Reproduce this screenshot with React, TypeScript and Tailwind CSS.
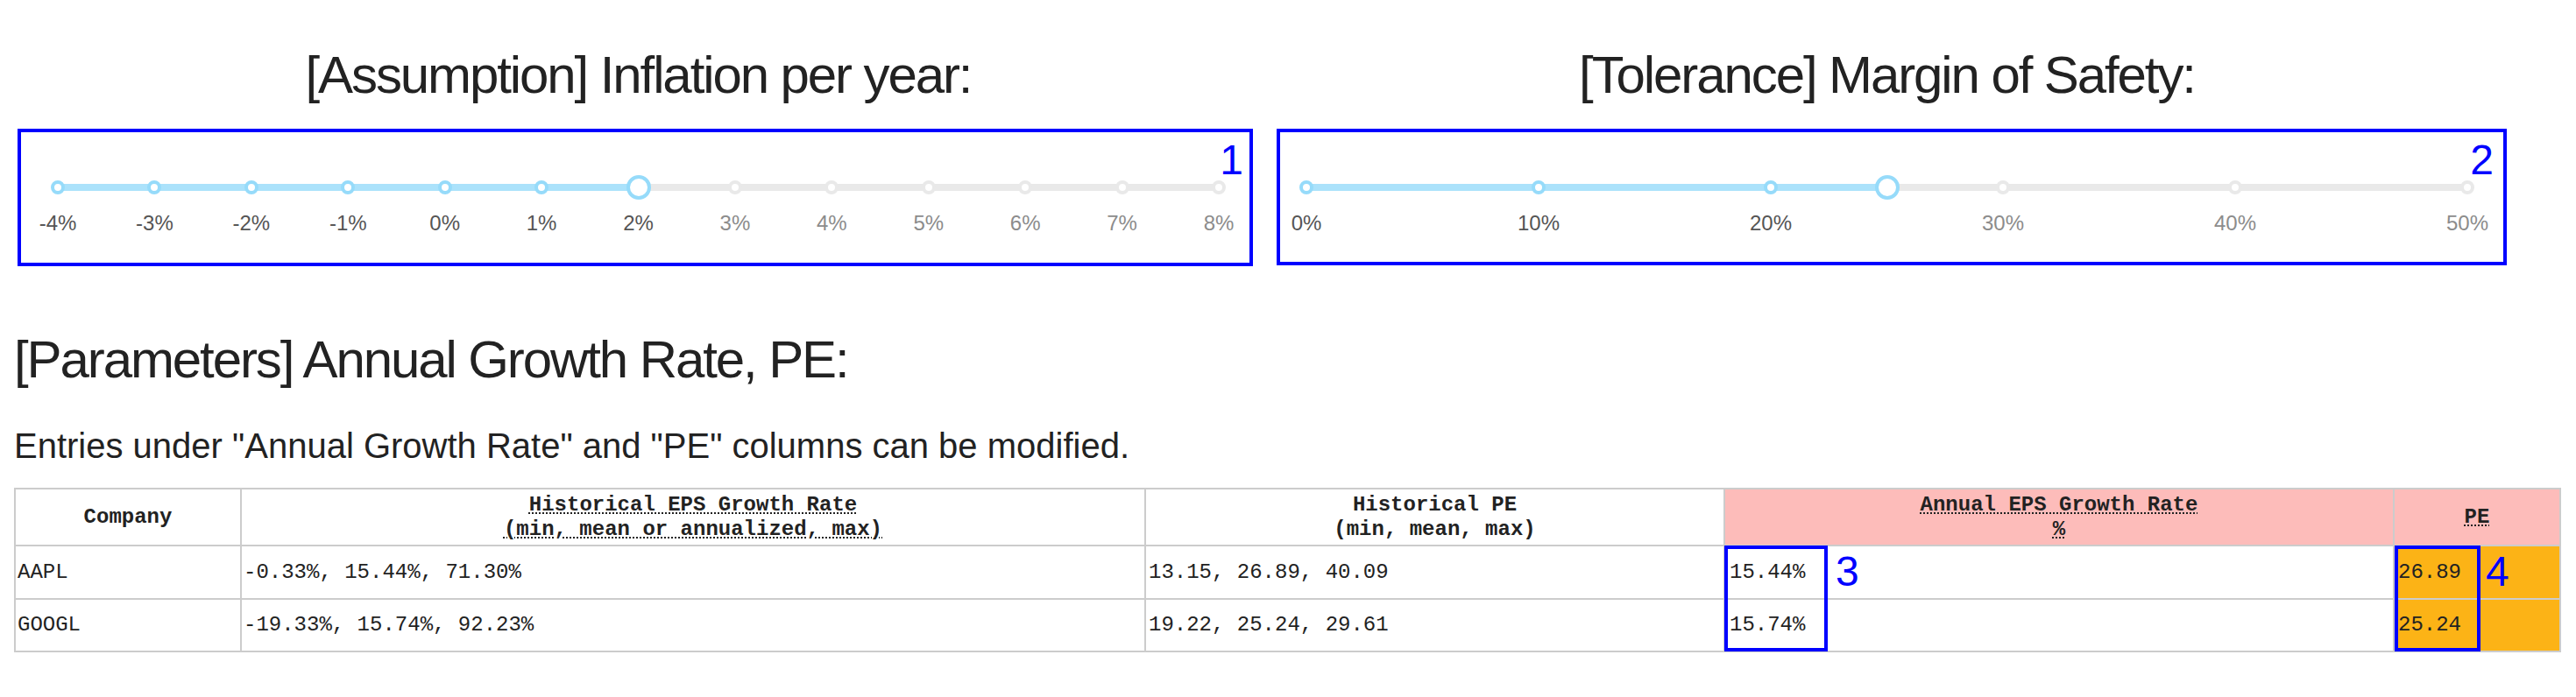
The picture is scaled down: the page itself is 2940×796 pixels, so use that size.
import React from "react";

const inflationMarks = ["-4%", "-3%", "-2%", "-1%", "0%", "1%", "2%", "3%", "4%", "5%", "6%", "7%", "8%"];
const marginMarks = ["0%", "10%", "20%", "30%", "40%", "50%"];

const rows = [
  { company: "AAPL", eps: "-0.33%, 15.44%, 71.30%", pe: "13.15, 26.89, 40.09", growth: "15.44%", fairPe: "26.89" },
  { company: "GOOGL", eps: "-19.33%, 15.74%, 92.23%", pe: "19.22, 25.24, 29.61", growth: "15.74%", fairPe: "25.24" },
];

// value is 0..1 along the rail
const Slider = ({ marks, value }: { marks: string[]; value: number }) => {
  const n = marks.length - 1;
  return (
    <div className="w-full px-[50px] mt-[82px]">
      <div className="relative h-[28px]">
        <div className="absolute left-0 right-0 top-[10px] h-[8px] rounded-full bg-[#e9e9e9]" />
        <div
          className="absolute left-0 top-[10px] h-[8px] rounded-full bg-[#abe2fb]"
          style={{ width: `${value * 100}%` }}
        />
        {marks.map((m, i) => (
          <span
            key={m}
            className={
              i / n <= value
                ? "absolute top-[6px] h-[16px] w-[16px] -translate-x-1/2 rounded-full border-[4px] border-[#96dbfa] bg-white"
                : "absolute top-[6px] h-[16px] w-[16px] -translate-x-1/2 rounded-full border-[4px] border-[#e9e9e9] bg-white"
            }
            style={{ left: `${(i / n) * 100}%` }}
          />
        ))}
        <span
          className="absolute top-0 h-[28px] w-[28px] -translate-x-1/2 rounded-full border-[4px] border-[#96dbfa] bg-white"
          style={{ left: `${value * 100}%` }}
        />
      </div>
      <div className="relative mt-[15px] h-[24px] text-[24px] leading-[24px]">
        {marks.map((m, i) => (
          <span
            key={m}
            className={
              i / n <= value
                ? "absolute top-0 -translate-x-1/2 whitespace-nowrap text-[#555]"
                : "absolute top-0 -translate-x-1/2 whitespace-nowrap text-[#8c8c8c]"
            }
            style={{ left: `${(i / n) * 100}%` }}
          >
            {m}
          </span>
        ))}
      </div>
    </div>
  );
};

const Head = ({ children, pink }: { children: React.ReactNode; pink?: boolean }) => (
  <div
    className={`flex flex-col items-center justify-center font-bold leading-[28px] ${
      pink ? "bg-[#fdbcba]" : "bg-white"
    }`}
  >
    {children}
  </div>
);

const Dotted = ({ children }: { children: React.ReactNode }) => (
  <span className="underline decoration-dotted decoration-2 underline-offset-[3px]">{children}</span>
);

export default function App() {
  return (
    <div className="min-h-screen bg-white pt-[54px] pl-[16px] font-['Liberation_Sans',Arial,sans-serif] text-[#222]">
      <div className="flex">
        <div className="relative flex w-[1425px] flex-col items-center">
          <h2 className="text-[60px] leading-[64px] tracking-[-2.1px]">[Assumption] Inflation per year:</h2>
          <Slider marks={inflationMarks} value={0.5} />
          <div className="absolute left-[4px] top-[93px] h-[157px] w-[1410px] border-[4px] border-[#0000ff]">
            <span className="absolute right-[7px] top-[8px] text-[48px] leading-[48px] text-[#0000ff]">1</span>
          </div>
        </div>
        <div className="relative flex w-[1425px] flex-col items-center">
          <h2 className="text-[60px] leading-[64px] tracking-[-2.1px]">[Tolerance] Margin of Safety:</h2>
          <Slider marks={marginMarks} value={0.5} />
          <div className="absolute left-[16px] top-[93px] h-[156px] w-[1404px] border-[4px] border-[#0000ff]">
            <span className="absolute right-[11px] top-[8px] text-[48px] leading-[48px] text-[#0000ff]">2</span>
          </div>
        </div>
      </div>

      <h2 className="mt-[112px] text-[60px] leading-[64px] tracking-[-2.1px]">[Parameters] Annual Growth Rate, PE:</h2>

      <p className="mt-[42px] text-[40px] leading-[48px]">
        Entries under "Annual Growth Rate" and "PE" columns can be modified.
      </p>

      <div className="relative mt-[24px] w-[2907px]">
        <div className="grid grid-cols-[256px_1030px_659px_762px_188px] grid-rows-[63px_59px_58px] gap-[2px] border-2 border-[#ccc] bg-[#ccc] font-['Liberation_Mono',monospace] text-[24px] text-[#222]">
          <Head>Company</Head>
          <Head>
            <Dotted>Historical EPS Growth Rate</Dotted>
            <Dotted>(min, mean or annualized, max)</Dotted>
          </Head>
          <Head>
            <span>Historical PE</span>
            <span>(min, mean, max)</span>
          </Head>
          <Head pink>
            <Dotted>Annual EPS Growth Rate</Dotted>
            <Dotted>%</Dotted>
          </Head>
          <Head pink>
            <Dotted>PE</Dotted>
          </Head>

          {rows.map((r) => (
            <React.Fragment key={r.company}>
              <div className="flex items-center bg-white pl-[2px]">{r.company}</div>
              <div className="flex items-center bg-white pl-[2px]">{r.eps}</div>
              <div className="flex items-center bg-white pl-[3px]">{r.pe}</div>
              <div className="flex items-center bg-white pl-[5px]">{r.growth}</div>
              <div className="flex items-center bg-[#fcb316] pl-[4px]">{r.fairPe}</div>
            </React.Fragment>
          ))}
        </div>

        <div className="absolute left-[1952px] top-[66px] h-[121px] w-[118px] border-[4px] border-[#0000ff]" />
        <span className="absolute left-[2079px] top-[72px] font-['Liberation_Sans',Arial,sans-serif] text-[48px] leading-[48px] text-[#0000ff]">
          3
        </span>
        <div className="absolute left-[2717px] top-[66px] h-[121px] w-[98px] border-[4px] border-[#0000ff]" />
        <span className="absolute left-[2821px] top-[72px] font-['Liberation_Sans',Arial,sans-serif] text-[48px] leading-[48px] text-[#0000ff]">
          4
        </span>
      </div>
    </div>
  );
}
